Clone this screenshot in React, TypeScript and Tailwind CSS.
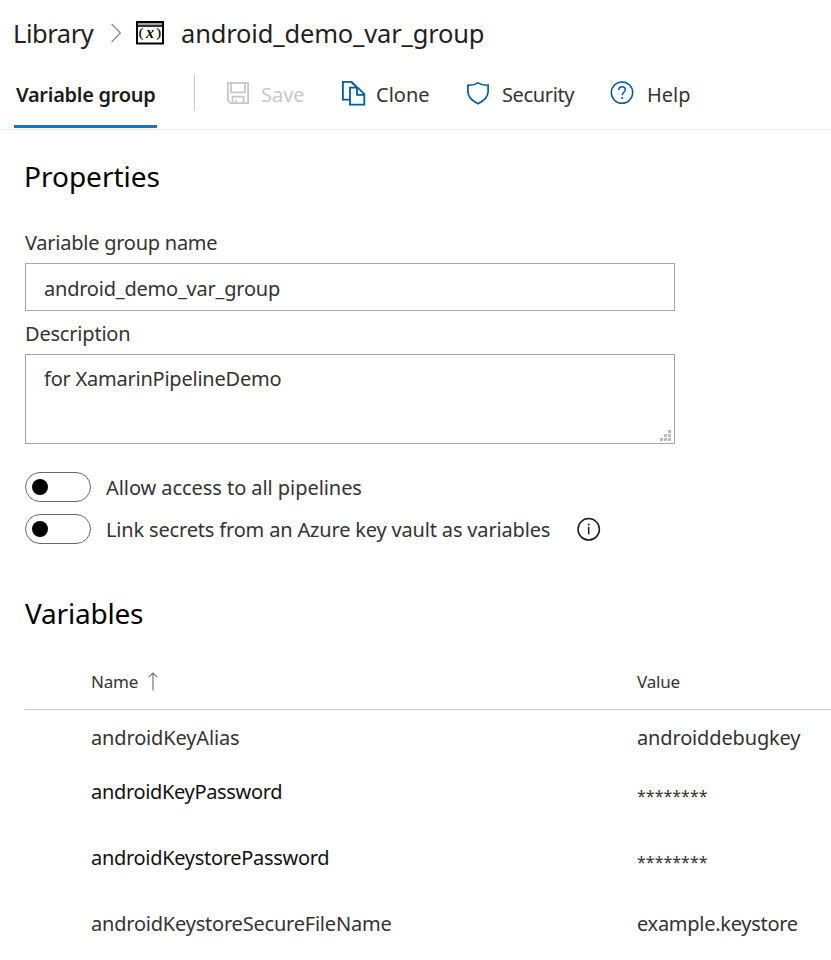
import type { ReactNode } from "react";

function LibraryIcon() {
  return (
    <svg width="28" height="24" viewBox="0 0 28 24" fill="none">
      <rect x="1" y="1" width="26" height="21.5" stroke="#000" strokeWidth="2" />
      <rect x="2" y="2.2" width="24" height="1.6" fill="#8a8a8a" />
      <rect x="2" y="4.2" width="24" height="1.6" fill="#000" />
      <g fontFamily="Liberation Serif, serif" fill="#000" stroke="#000" strokeWidth="0.3">
        <text x="2.8" y="16.4" fontSize="13.5">(</text>
        <text x="10" y="17.2" fontSize="16" fontStyle="italic" fontWeight="700" strokeWidth="0">x</text>
        <text x="20.6" y="16.4" fontSize="13.5">)</text>
      </g>
    </svg>
  );
}

function SaveIcon() {
  return (
    <svg width="22" height="22" viewBox="0 0 22 22" fill="none" stroke="#c8c8c8" strokeWidth="1.8">
      <path d="M.9.9h20.2v20.2H3.500L.9 18.500z" />
      <path d="M4 .9v9.500h14V.9M5.500 21.200v-6.500h11v6.500M8.800 21.200v-3.500" />
    </svg>
  );
}

function CloneIcon() {
  return (
    <svg width="24" height="25" viewBox="0 0 24 25" fill="none" stroke="#005ba1" strokeWidth="1.8">
      <path d="M7.500 18.600H.9V.9h8.600l4.800 4.800" />
      <path d="M8 6.600h7.800l6.500 6.500v10.600H8z" />
      <path d="M15 6.600v7.200h7.300" />
      <path d="M9.400.9l5.600 5.700" />
    </svg>
  );
}

function ShieldIcon() {
  return (
    <svg width="22" height="23" viewBox="0 0 22 23" fill="none" stroke="#005ba1" strokeWidth="1.7">
      <path d="M11 .9C8.400 2.700 4.800 3.400.9 3.200v6.400c0 5.200 3.800 9.100 10.100 12.200 6.300-3.100 10.100-7 10.100-12.200V3.200C17.200 3.400 13.600 2.700 11 .9z" />
    </svg>
  );
}

function HelpIcon() {
  return (
    <svg width="24" height="24" viewBox="0 0 24 24" fill="none" stroke="#005ba1" strokeWidth="1.5">
      <circle cx="12" cy="11.600" r="10.700" />
      <path d="M8.700 9c0-2 1.400-3.300 3.400-3.300s3.300 1.200 3.300 2.900c0 2.600-3.200 2.700-3.200 5.600" />
      <path d="M11.300 17h1.800" strokeWidth="1.8" />
    </svg>
  );
}

function InfoIcon() {
  return (
    <svg width="24" height="24" viewBox="0 0 24 24" fill="none" stroke="#1b1b1b" strokeWidth="1.500">
      <circle cx="11.700" cy="12.300" r="10.700" />
      <path d="M11.700 10v7.200" />
      <path d="M10.800 7.600h1.800" strokeWidth="1.8" />
    </svg>
  );
}

function Toggle({ children }: { children: ReactNode }) {
  return (
    <div className="flex h-[30px] items-center">
      <div className="mr-[15px] flex h-[30px] w-[66px] items-center rounded-full border border-[#666] pl-[6px]">
        <div className="size-4 rounded-full bg-black" />
      </div>
      {children}
    </div>
  );
}

const secret = <span className="pt-[8px] text-[16px]">********</span>;

export default function App() {
  return (
    <div className="flex h-[960px] w-full flex-col overflow-hidden bg-white font-['Noto_Sans',sans-serif] text-[20px] leading-none whitespace-nowrap text-[#333]">
      <header className="flex h-[60px] items-center pt-[6px] pl-[12px] text-[25.5px] text-[#1f1f1f]">
        <span className="w-[99px] pt-[2px] pl-px tracking-[-0.45px]">Library</span>
        <svg className="mr-[15px] -mt-px" width="10" height="20" viewBox="0 0 10 20" fill="none" stroke="#888" strokeWidth="1.2">
          <path d="M.6 1 9.300 10 .6 19" />
        </svg>
        <div className="w-[45px] pb-px">
          <LibraryIcon />
        </div>
        <span className="pt-[2px] tracking-[-0.17px]">android_demo_var_group</span>
      </header>

      <nav className="flex h-[70px] border-b border-[#eaeaea] pl-[14px]">
        <div className="flex h-[68px] w-[143px] items-center border-b-[3px] border-[#0078d4] pt-[5px] pl-[2px] font-semibold tracking-[-0.28px] text-[#1b1b1b]">
          Variable group
        </div>
        <div className="mt-[15px] ml-[37px] h-[36px] w-px bg-[#c8c8c8]" />
        <div className="flex h-[68px] items-center text-[#333]">
          <div className="ml-[32px] w-[34px] pb-[2px]"><SaveIcon /></div>
          <span className="w-[81px] pt-[2px] text-[#c8c8c8]">Save</span>
          <div className="w-[34px] pb-[2px]"><CloneIcon /></div>
          <span className="w-[91px] pt-[2px]">Clone</span>
          <div className="w-[34px] pb-[2px]"><ShieldIcon /></div>
          <span className="w-[109px] pt-[2px] pl-px tracking-[-0.36px]">Security</span>
          <div className="w-[37px] pb-[3px]"><HelpIcon /></div>
          <span className="pt-[2px]">Help</span>
        </div>
      </nav>

      <main className="flex flex-col pl-[25px]">
        <h2 className="flex h-[92px] items-center text-[28px] text-black">
          <span className="-ml-px">Properties</span>
        </h2>
        <label className="flex h-[41px] items-center tracking-[-0.25px]">Variable group name</label>
        <div className="flex h-[48px] w-[650px] items-center border border-[#a6a6a6] pt-[4px] pl-[18px] tracking-[-0.22px]">
          android_demo_var_group
        </div>
        <label className="flex h-[43px] items-center pt-[3px]">
          <span className="tracking-[-0.2px]">Description</span>
        </label>
        <div className="flex h-[90px] w-[650px] justify-between border border-[#a6a6a6] pl-[18px] tracking-[-0.23px]">
          <span className="leading-[48px]">for XamarinPipelineDemo</span>
          <svg className="mr-[3px] mb-[2px] self-end" width="11" height="11" viewBox="0 0 11 11" fill="#bcbcbc">
            <path d="M8 0h3v3H8zM4 4h3v3H4zM8 4h3v3H8zM0 8h3v3H0zM4 8h3v3H4zM8 8h3v3H8z" />
          </svg>
        </div>

        <div className="flex flex-col gap-[12px] pt-[28px]">
          <Toggle>
            <span className="pt-[2px] tracking-[-0.06px]">Allow access to all pipelines</span>
          </Toggle>
          <Toggle>
            <span className="w-[471px] pt-[2px] tracking-[-0.17px]">Link secrets from an Azure key vault as variables</span>
            <InfoIcon />
          </Toggle>
        </div>

        <h2 className="flex h-[110px] items-center pt-[28px] text-[28px] tracking-[-0.2px] text-black">Variables</h2>

        <div className="grid h-[56px] grid-cols-[546px_1fr] items-center border-b border-[#c8c8c8] pl-[66px] text-[17px]">
          <span className="flex items-center gap-[10px]">
            <span className="tracking-[-0.2px]">Name</span>
            <svg width="10" height="19" viewBox="0 0 10 19" fill="none" stroke="#777" strokeWidth="1.2">
              <path d="M5 18.500V1M.8 5.200 5 1l4.200 4.200" />
            </svg>
          </span>
          <span className="tracking-[-0.2px]">Value</span>
        </div>
        <div className="grid h-[48px] grid-cols-[546px_1fr] items-center pt-[8px] pl-[66px]">
          <span className="tracking-[-0.15px]">androidKeyAlias</span>
          <span className="tracking-[-0.15px]">androiddebugkey</span>
        </div>
        <div className="grid h-[66px] grid-cols-[546px_1fr] items-center pt-[2px] pl-[66px]">
          <span className="tracking-[-0.33px] text-[#111]">androidKeyPassword</span>
          {secret}
        </div>
        <div className="grid h-[66px] grid-cols-[546px_1fr] items-center pt-[2px] pl-[66px]">
          <span className="tracking-[-0.3px] text-[#111]">androidKeystorePassword</span>
          {secret}
        </div>
        <div className="grid h-[66px] grid-cols-[546px_1fr] items-center pt-[2px] pl-[66px]">
          <span className="tracking-[-0.21px]">androidKeystoreSecureFileName</span>
          <span className="tracking-[-0.28px]">example.keystore</span>
        </div>
      </main>
    </div>
  );
}
